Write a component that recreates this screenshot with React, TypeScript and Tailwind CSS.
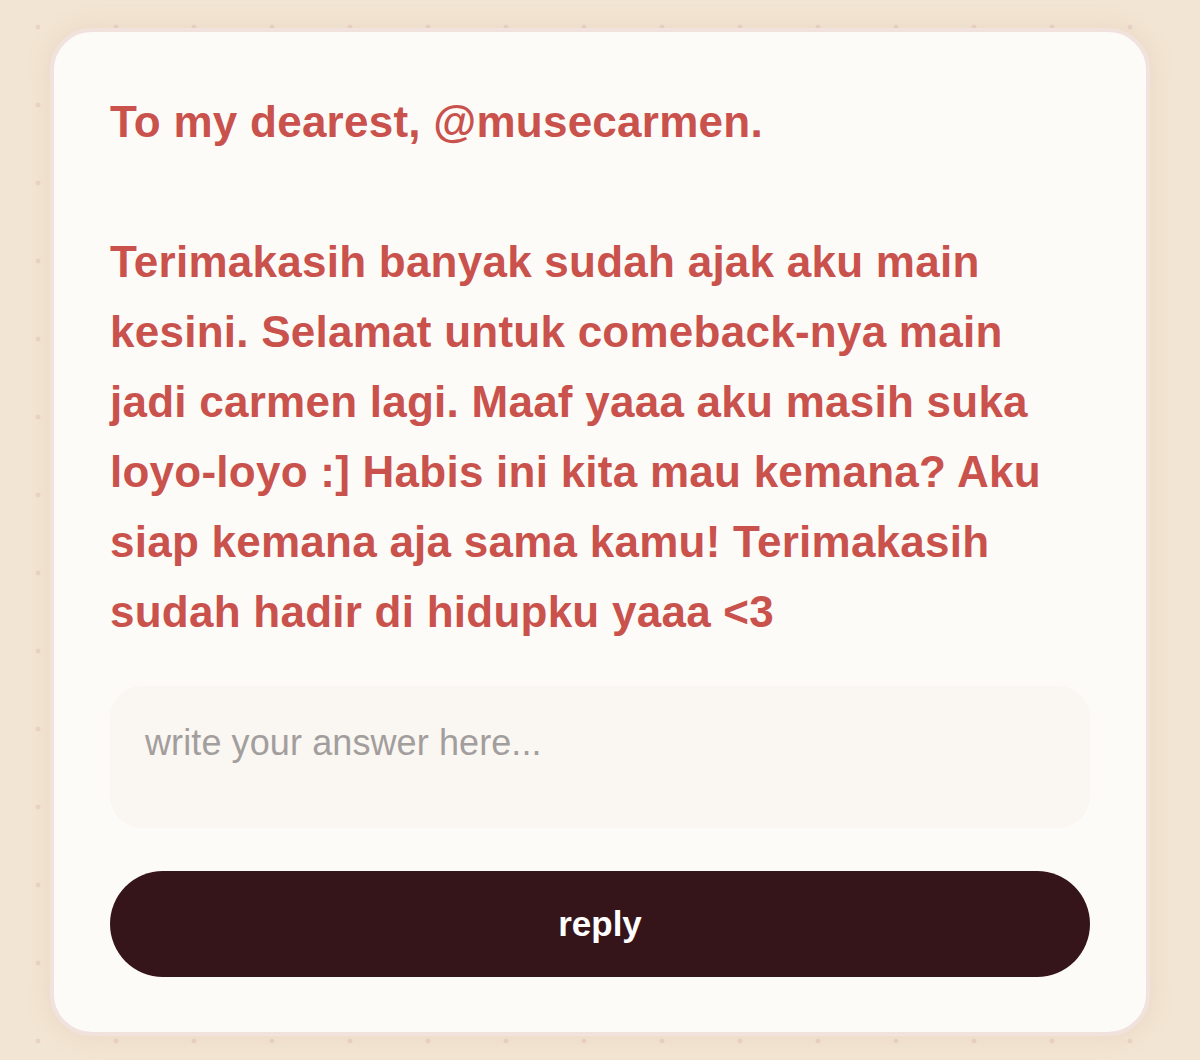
import React from "react";

export default function App() {
  return (
    <div className="w-[1200px] h-[1060px] overflow-hidden bg-[#f3e5d3] bg-[radial-gradient(circle,#ead2c6_2px,transparent_2.8px)] bg-[length:78px_78px] bg-[position:-1px_-12px] pt-[28px] px-[50px] font-['Liberation_Sans',Arial,sans-serif]">
      <div className="w-[1100px] rounded-[42px] border-[4px] border-[#f2e2de] bg-[#fdfbf8] shadow-[0_0_24px_rgba(190,150,120,0.18)] px-[56px] pt-[55px] pb-[55px] flex flex-col">
        <div className="h-[560px] pr-[30px] text-[44px] leading-[70px] tracking-[0.25px] font-bold text-[#c9524d]">
          <p>To my dearest, @musecarmen.</p>
          <p className="h-[70px]"></p>
          <p>
            Terimakasih banyak sudah ajak aku main kesini. Selamat untuk comeback-nya main jadi carmen lagi. Maaf yaaa aku masih suka loyo-loyo :] Habis ini kita mau kemana? Aku siap kemana aja sama kamu! Terimakasih sudah hadir di hidupku yaaa &lt;3
          </p>
        </div>
        <textarea
          placeholder="write your answer here..."
          className="mt-[39px] h-[142px] w-full resize-none rounded-[32px] bg-[#faf6f1] px-[35px] pt-[30px] text-[36px] leading-[54px] tracking-[0.1px] text-[#3a2a2a] placeholder:text-[#a29e9d] outline-none font-['Liberation_Sans',Arial,sans-serif]"
        />
        <button className="mt-[43px] h-[106px] w-full rounded-full bg-[#36151a] text-[35px] font-bold text-white font-['Liberation_Sans',Arial,sans-serif]">
          reply
        </button>
      </div>
    </div>
  );
}
